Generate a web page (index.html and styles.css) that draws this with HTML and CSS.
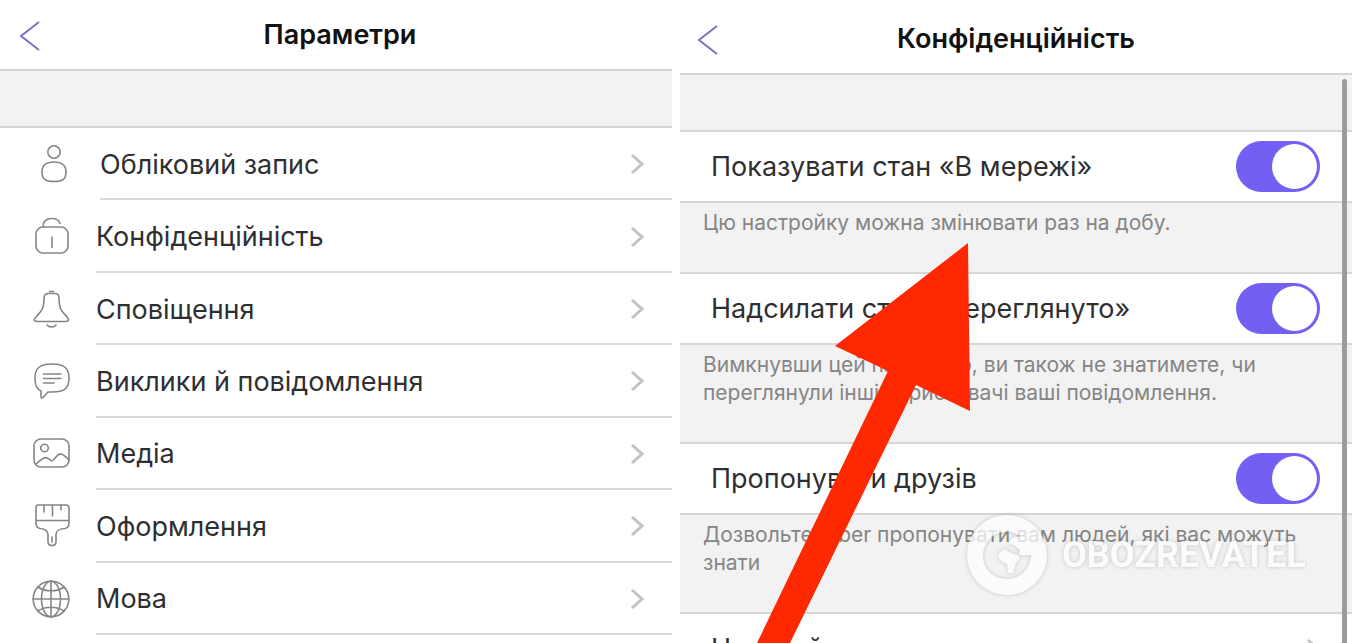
FILE: index.html
```html
<!DOCTYPE html>
<html lang="uk">
<head>
    <meta charset="UTF-8">
    <meta name="viewport" content="width=device-width, initial-scale=1.0">
    <title>Параметри</title>
    <link rel="stylesheet" href="styles.css">
</head>
<body>

    <!-- Список параметрів -->
    <section class="panel settings">
        <header class="header">
            <button class="back" aria-label="Назад">
                <svg width="20" height="30" viewBox="0 0 20 30"><path d="M19 1 L1 15 L19 29"/></svg>
            </button>
            <h1>Параметри</h1>
        </header>
        <div class="band"></div>
        <nav class="list">
            <a class="item item-account" href="#account">
                <svg class="icon" viewBox="0 0 38 38"><circle cx="18" cy="7" r="6.2"/><path d="M18 17 C26 17 30 20 30 27 C30 34 27 36.500 18 36.500 C9 36.500 6 34 6 27 C6 20 10 17 18 17 Z"/></svg>
                <span class="item-body">Обліковий запис
                    <svg class="chevron" viewBox="0 0 14 22"><path d="M2 2 L12 11 L2 20"/></svg>
                </span>
            </a>
            <a class="item" href="#privacy">
                <svg class="icon" viewBox="0 0 38 38"><rect x="4" y="9" width="32" height="26" rx="7"/><path d="M11 9 C11 3 15 0.500 20 0.500 C24 0.500 27 2 28 5.500 M20 19 V29.500"/></svg>
                <span class="item-body">Конфіденційність
                    <svg class="chevron" viewBox="0 0 14 22"><path d="M2 2 L12 11 L2 20"/></svg>
                </span>
            </a>
            <a class="item" href="#notifications">
                <svg class="icon" viewBox="0 0 38 38"><path d="M17.500 1.500 H21.500 M12 8 C12 5 14 3.500 16 3.500 H23 C25 3.500 27 5 27 8 C27 20 30 21 35 27 C38 31 36 31.500 33 31.500 H6 C2 31.500 1 30 4 27 C9 21 12 20 12 8 Z M15 35 C17 37.500 22 37.500 24 35"/></svg>
                <span class="item-body">Сповіщення
                    <svg class="chevron" viewBox="0 0 14 22"><path d="M2 2 L12 11 L2 20"/></svg>
                </span>
            </a>
            <a class="item" href="#messages">
                <svg class="icon" viewBox="0 0 38 38"><path d="M20 2 C32 2 37 6 37 16 C37 27 32 30 20 30 L16 30 L11 35.500 C9.500 36.500 9 36 9 34 V29 C5 27.500 3 23 3 16 C3 6 8 2 20 2 Z M11.500 12 H29 M11.500 16.500 H29 M11.500 21 H22"/></svg>
                <span class="item-body">Виклики й повідомлення
                    <svg class="chevron" viewBox="0 0 14 22"><path d="M2 2 L12 11 L2 20"/></svg>
                </span>
            </a>
            <a class="item" href="#media">
                <svg class="icon" viewBox="0 0 38 38"><rect x="2" y="4" width="35" height="28" rx="7"/><circle cx="12.500" cy="13" r="3.800"/><path d="M4 29 C11 23 13 21 17 24 C20 27 21 26 24 22 C28 17 30 18 37 25"/></svg>
                <span class="item-body">Медіа
                    <svg class="chevron" viewBox="0 0 14 22"><path d="M2 2 L12 11 L2 20"/></svg>
                </span>
            </a>
            <a class="item" href="#appearance">
                <svg class="icon icon-brush" viewBox="0 0 38 44"><path d="M6 1 H34 C36 1 37 2 37 4 V19 C37 22 36 24 33 24.500 C26 25 24 27 24 31 V37.500 C24 43 16 43 16 37.500 V31 C16 27 14 25 8 24.500 C5 24 4 22 4 19 V4 C4 2 5 1 6 1 Z M4 16.500 H37 M12 1 V8 M20.500 1 V12 M29 1 V6 M20 33 V38"/></svg>
                <span class="item-body">Оформлення
                    <svg class="chevron" viewBox="0 0 14 22"><path d="M2 2 L12 11 L2 20"/></svg>
                </span>
            </a>
            <a class="item" href="#language">
                <svg class="icon" viewBox="0 0 38 38"><circle cx="19" cy="19" r="17.800"/><ellipse cx="19" cy="19" rx="9.500" ry="17.800"/><path d="M19 1 V37 M1 19 H37 M6 7 C13 12 25 12 32 7 M6 31 C13 26 25 26 32 31"/></svg>
                <span class="item-body">Мова
                    <svg class="chevron" viewBox="0 0 14 22"><path d="M2 2 L12 11 L2 20"/></svg>
                </span>
            </a>
        </nav>
    </section>

    <!-- Конфіденційність -->
    <section class="panel privacy">
        <header class="header">
            <button class="back" aria-label="Назад">
                <svg width="20" height="30" viewBox="0 0 20 30"><path d="M19 1 L1 15 L19 29"/></svg>
            </button>
            <h1>Конфіденційність</h1>
        </header>
        <div class="band"></div>

        <div class="row">
            <label for="online">Показувати стан «В мережі»</label>
            <input class="toggle" type="checkbox" id="online" checked>
        </div>
        <p class="hint">Цю настройку можна змінювати раз на добу.</p>

        <div class="row">
            <label for="seen">Надсилати стан «Переглянуто»</label>
            <input class="toggle" type="checkbox" id="seen" checked>
        </div>
        <p class="hint">Вимкнувши цей параметр, ви також не знатимете, чи переглянули інші користувачі ваші повідомлення.</p>

        <div class="row">
            <label for="friends">Пропонувати друзів</label>
            <input class="toggle" type="checkbox" id="friends" checked>
        </div>
        <p class="hint">Дозвольте Viber пропонувати вам людей, які вас можуть знати</p>

        <a class="row" href="#personal">Настройки персональних даних
            <svg class="chevron" viewBox="0 0 14 22"><path d="M2 2 L12 11 L2 20"/></svg>
        </a>

        <div class="scrollbar"></div>

        <!-- Червона стрілка -->
        <svg class="arrow" width="214" height="400" viewBox="0 0 214 400">
            <path d="M211 0 L213 168 L159 142 L33 400 H0 L131 128 L78 103 Z"/>
        </svg>

        <div class="watermark">
            <svg width="82" height="82" viewBox="0 0 82 82">
                <path fill-rule="evenodd" d="M41 1 A40 40 0 1 1 41 81 A40 40 0 1 1 41 1 Z M46 18 C30 15 17 27 17 42 C17 56 28 65 41 65 C54 65 65 55 65 41 H53 L54 36 L48 31 L42 30 L46 24 L54 22 Z M34 38 L39 35 L45 39 L52 41 L54 44 L50 49 L47 59 L42 59 L41 50 L35 47 L32 43 Z"/>
            </svg>
            <span>OBOZREVATEL</span>
        </div>
    </section>

</body>
</html>
```
FILE: styles.css
```css
* {
    box-sizing: border-box;
}
body {
    margin: 0;
    height: 100vh;
    overflow: hidden;
    display: grid;
    grid-template-columns: 1fr 1fr;
    gap: 8px;
    background: #fff;
    color: #2f2f31;
    font-family: Inter, "Liberation Sans", sans-serif;
    font-size: 27px;
}
a {
    color: inherit;
    text-decoration: none;
}
svg {
    flex-shrink: 0;
    fill: none;
}
.panel {
    position: relative;
    overflow: hidden;
}

/* шапка */
.header {
    display: grid;
    grid-template-columns: 60px 1fr 52px;
    align-items: center;
    height: 71px;
    border-bottom: 2px solid #d6d6d6;
}
.privacy .header {
    grid-template-columns: 58px 1fr 58px;
    height: 75px;
    padding-top: 4px;
}
.header h1 {
    margin: 0;
    font-size: 27px;
    line-height: 32px;
    font-weight: 600;
    text-align: center;
    color: #111;
}
.back {
    display: flex;
    padding: 2px 0 0 20px;
    border: none;
    background: none;
    cursor: pointer;
}
.privacy .back {
    padding-left: 18px;
}
.back path {
    stroke: #7d72c4;
    stroke-width: 2;
}
.band {
    height: 57px;
    background: #f2f2f2;
    border-bottom: 2px solid #d6d6d6;
}

/* список */
.list {
    display: grid;
    grid-auto-rows: 1fr;
    min-height: 507px;
}
.item {
    display: flex;
    align-items: center;
    gap: 26px;
    padding-left: 32px;
}
.item-account {
    padding-left: 36px;
}
.icon {
    width: 38px;
    height: 38px;
    stroke: #858585;
    stroke-width: 1.6;
    stroke-linecap: round;
    overflow: visible;
}
.icon-brush {
    height: 44px;
}
.item-body {
    flex: 1;
    align-self: stretch;
    display: flex;
    align-items: center;
    justify-content: space-between;
    padding: 2px 28px 0 0;
    border-bottom: 2px solid #dadada;
}
.chevron {
    width: 14px;
    height: 22px;
    stroke: #c2c2c2;
    stroke-width: 3;
}

/* перемикачі */
.row {
    display: flex;
    align-items: center;
    justify-content: space-between;
    height: 69px;
    padding: 0 32px 0 31px;
}
.toggle {
    appearance: none;
    display: flex;
    justify-content: flex-end;
    width: 84px;
    height: 51px;
    margin: 0;
    padding: 3px;
    border-radius: 26px;
    background: #7360f2;
    cursor: pointer;
}
.toggle::before {
    content: "";
    width: 45px;
    height: 45px;
    border-radius: 50%;
    background: #fff;
}
.toggle:not(:checked) {
    justify-content: flex-start;
    background: #d2d2d2;
}
.hint {
    margin: 0;
    padding: 6px 40px 35px 23px;
    border-top: 2px solid #d6d6d6;
    border-bottom: 2px solid #d6d6d6;
    background: #f2f2f2;
    color: #858585;
    font-size: 21px;
    line-height: 28px;
}

/* поверх сторінки */
.scrollbar {
    position: absolute;
    top: 79px;
    right: 5px;
    bottom: -6px;
    width: 5px;
    border-radius: 3px;
    background: #9c9c9c;
}
.arrow {
    position: absolute;
    top: 243px;
    left: 77px;
    fill: #ff2800;
}
.watermark {
    position: absolute;
    top: 514px;
    left: 286px;
    display: flex;
    align-items: center;
    gap: 14px;
    color: #fff;
    font-family: Roboto, sans-serif;
    font-size: 36px;
    font-weight: 700;
    opacity: 0.75;
    filter: drop-shadow(0 0 2px rgba(0, 0, 0, 0.25));
    pointer-events: none;
}
.watermark svg {
    fill: #fff;
}
```
